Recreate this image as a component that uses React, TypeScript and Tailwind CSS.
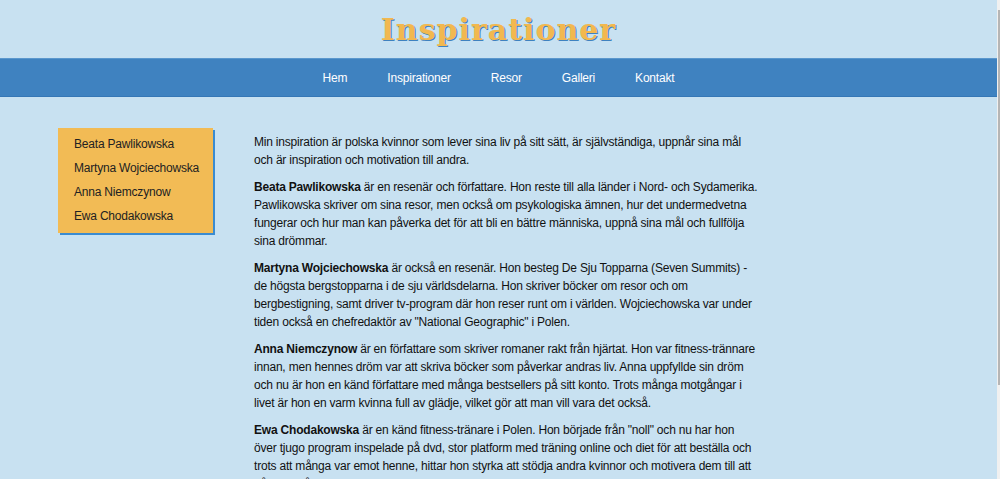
import React from "react"

const navItems = ["Hem", "Inspirationer", "Resor", "Galleri", "Kontakt"]
const women = ["Beata Pawlikowska", "Martyna Wojciechowska", "Anna Niemczynow", "Ewa Chodakowska"]

export default function App() {
  return (
    <div className="flex h-[479px] w-[1000px] overflow-hidden bg-[#c8e1f1] font-['Liberation_Sans',Arial,sans-serif] text-[12px] tracking-[-0.2px] text-[#111]">
      <div className="flex-1">
        <header className="flex h-[58px] items-center justify-center">
          <h1 className="font-['DejaVu_Serif',serif] text-[30px] font-bold tracking-[1px] text-[#f2b84f] [text-shadow:1px_1px_0_#3f82c0]">
            Inspirationer
          </h1>
        </header>

        <nav className="flex h-[39px] items-center justify-center border-t border-t-[#5b97cd] border-b border-b-[#3577b6] bg-[#3f82c0]">
          {navItems.map((item) => (
            <a key={item} href="#" className="px-5 text-white">
              {item}
            </a>
          ))}
        </nav>

        <div className="flex gap-[41px] pl-[58px] pt-[31px]">
          <aside className="h-[105px] w-[155px] shrink-0 bg-[#f2bb55] pl-[16px] pt-[4px] shadow-[2px_2px_0_#3b8bd0]">
            {women.map((name) => (
              <div key={name} className="h-[24px] whitespace-nowrap leading-[24px] text-[#222]">
                {name}
              </div>
            ))}
          </aside>

          <main className="w-[506px] pt-[5px] leading-[18px]">
            <p className="mb-[9px]">
              Min inspiration är polska kvinnor som lever sina liv på sitt sätt, är självständiga, uppnår sina mål och är inspiration och motivation till andra.
            </p>
            <p className="mb-[9px]">
              <b>Beata Pawlikowska</b> är en resenär och författare. Hon reste till alla länder i Nord- och Sydamerika. Pawlikowska skriver om sina resor, men också om psykologiska ämnen, hur det undermedvetna fungerar och hur man kan påverka det för att bli en bättre människa, uppnå sina mål och fullfölja sina drömmar.
            </p>
            <p className="mb-[9px]">
              <b>Martyna Wojciechowska</b> är också en resenär. Hon besteg De Sju Topparna (Seven Summits) - de högsta bergstopparna i de sju världsdelarna. Hon skriver böcker om resor och om bergbestigning, samt driver tv-program där hon reser runt om i världen. Wojciechowska var under tiden också en chefredaktör av "National Geographic" i Polen.
            </p>
            <p className="mb-[9px]">
              <b>Anna Niemczynow</b> är en författare som skriver romaner rakt från hjärtat. Hon var fitness-trännare innan, men hennes dröm var att skriva böcker som påverkar andras liv. Anna uppfyllde sin dröm och nu är hon en känd författare med många bestsellers på sitt konto. Trots många motgångar i livet är hon en varm kvinna full av glädje, vilket gör att man vill vara det också.
            </p>
            <p className="mb-[9px]">
              <b>Ewa Chodakowska</b> är en känd fitness-tränare i Polen. Hon började från "noll" och nu har hon
              <br />
              över tjugo program inspelade på dvd, stor platform med träning online och diet för att beställa och trots att många var emot henne, hittar hon styrka att stödja andra kvinnor och motivera dem till att nå sina mål.
            </p>
          </main>
        </div>
      </div>

      <div className="w-[3px] shrink-0 bg-[#f0f0f0] pt-[10px]">
        <div className="ml-[1px] h-[375px] w-[2px] bg-[#b5b5b5]" />
      </div>
    </div>
  )
}
